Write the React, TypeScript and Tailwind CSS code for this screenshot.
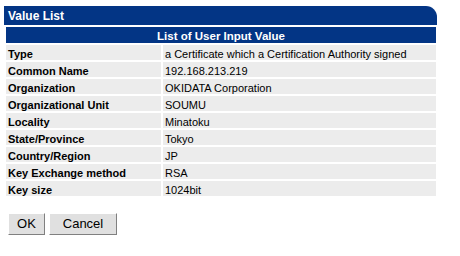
import React from "react";

const rows: [string, string][] = [
  ["Type", "a Certificate which a Certification Authority signed"],
  ["Common Name", "192.168.213.219"],
  ["Organization", "OKIDATA Corporation"],
  ["Organizational Unit", "SOUMU"],
  ["Locality", "Minatoku"],
  ["State/Province", "Tokyo"],
  ["Country/Region", "JP"],
  ["Key Exchange method", "RSA"],
  ["Key size", "1024bit"],
];

export default function App() {
  return (
    <div
      className="w-[460px] h-[256px] bg-white text-black"
      style={{ fontFamily: '"Liberation Sans", Arial, sans-serif' }}
    >
      <div className="pt-[6px] pl-[4px]">
        <div className="w-[433px] h-[19px] bg-[#033585] rounded-tr-[11px] flex items-center pl-[4px] pt-[1px] text-white font-bold text-[12px]">
          Value List
        </div>
        <div className="ml-[2px] w-[430px] mt-[2px] flex flex-col gap-[2px]">
          <div className="h-[16px] bg-[#033585] text-white font-bold text-[11.5px] leading-[14px] text-center pt-[2px]">
            List of User Input Value
          </div>
          {rows.map(([k, v]) => (
            <div key={k} className="grid grid-cols-[155px_273px] grid-rows-[15px] gap-[2px] h-[15px] text-[11px] leading-[15px]">
              <div className="bg-[#ececec] font-bold pl-[2px] pt-[2px] overflow-visible">{k}</div>
              <div className="bg-[#ececec] pl-[2px] pt-[2px] overflow-visible">{v}</div>
            </div>
          ))}
        </div>
        <div className="flex gap-[4px] mt-[17px] ml-[4px]">
          <button className="w-[37px] h-[22px] bg-[#e0e0e0] border border-t-white border-l-white border-b-[#808080] border-r-[#808080] text-[13px] leading-[18px]">
            OK
          </button>
          <button className="w-[68px] h-[22px] bg-[#e0e0e0] border border-t-white border-l-white border-b-[#808080] border-r-[#808080] text-[13px] leading-[18px]">
            Cancel
          </button>
        </div>
      </div>
    </div>
  );
}
